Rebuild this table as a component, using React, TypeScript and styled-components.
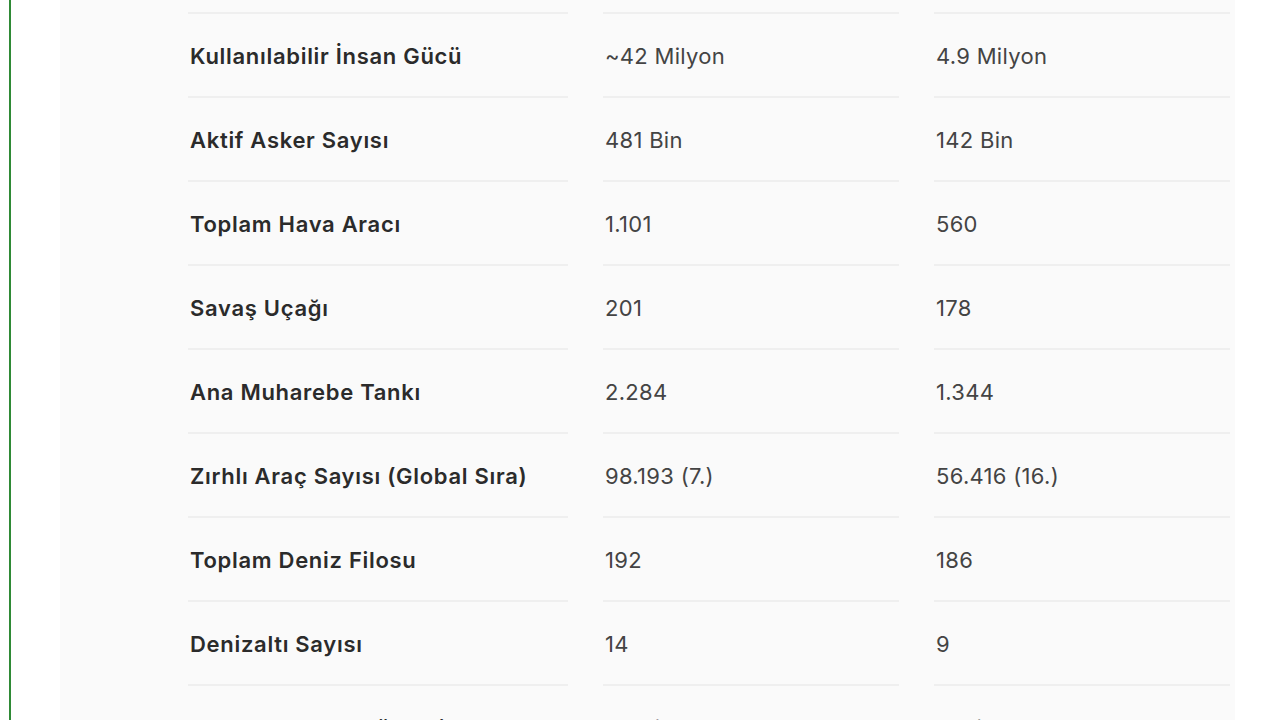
import React from "react";
import styled, { createGlobalStyle } from "styled-components";

const GlobalStyle = createGlobalStyle`
  html, body {
    margin: 0;
    padding: 0;
    background: #ffffff;
    overflow: hidden;
  }
  body {
    font-family: Inter, "Noto Sans", "Liberation Sans", sans-serif;
  }
`;

const Page = styled.div`
  display: flex;
  width: 1280px;
  height: 720px;
  overflow: hidden;
`;

const Gutter = styled.div`
  width: 9px;
  flex-shrink: 0;
`;

const GreenRule = styled.div`
  width: 2px;
  flex-shrink: 0;
  background: #2f8a36;
`;

const Spacer = styled.div`
  width: 49px;
  flex-shrink: 0;
`;

const Panel = styled.div`
  width: 1175px;
  flex-shrink: 0;
  background: #fafafa;
  padding: 0 5px 0 128px;
  box-sizing: border-box;
`;

const Table = styled.div`
  margin-top: -70px;
  display: flex;
  flex-direction: column;
`;

const Row = styled.div`
  display: grid;
  grid-template-columns: 380px 296px 296px;
  column-gap: 35px;
  height: 84px;
`;

const Cell = styled.div<{ $label?: boolean }>`
  display: flex;
  align-items: center;
  border-bottom: 2px solid #efefef;
  box-sizing: border-box;
  padding: 2px 0 0 2px;
  font-size: 22px;
  letter-spacing: ${(p) => (p.$label ? "0.7px" : "0.3px")};
  font-weight: ${(p) => (p.$label ? 600 : 400)};
  color: ${(p) => (p.$label ? "#2b2b2b" : "#444444")};
  white-space: nowrap;
`;

const rows: [string, string, string][] = [
  ["Toplam Nüfus", "~85 Milyon", "9.4 Milyon"],
  ["Kullanılabilir İnsan Gücü", "~42 Milyon", "4.9 Milyon"],
  ["Aktif Asker Sayısı", "481 Bin", "142 Bin"],
  ["Toplam Hava Aracı", "1.101", "560"],
  ["Savaş Uçağı", "201", "178"],
  ["Ana Muharebe Tankı", "2.284", "1.344"],
  ["Zırhlı Araç Sayısı (Global Sıra)", "98.193 (7.)", "56.416 (16.)"],
  ["Toplam Deniz Filosu", "192", "186"],
  ["Denizaltı Sayısı", "14", "9"],
  ["Yıllık Savunma Bütçesi", "21 Milyar Dolar", "9 Milyar Dolar"],
];

export default function App() {
  return (
    <>
      <GlobalStyle />
      <Page>
        <Gutter />
        <GreenRule />
        <Spacer />
        <Panel>
          <Table>
            {rows.map((r) => (
              <Row key={r[0]}>
                <Cell $label>{r[0]}</Cell>
                <Cell>{r[1]}</Cell>
                <Cell>{r[2]}</Cell>
              </Row>
            ))}
          </Table>
        </Panel>
      </Page>
    </>
  );
}
